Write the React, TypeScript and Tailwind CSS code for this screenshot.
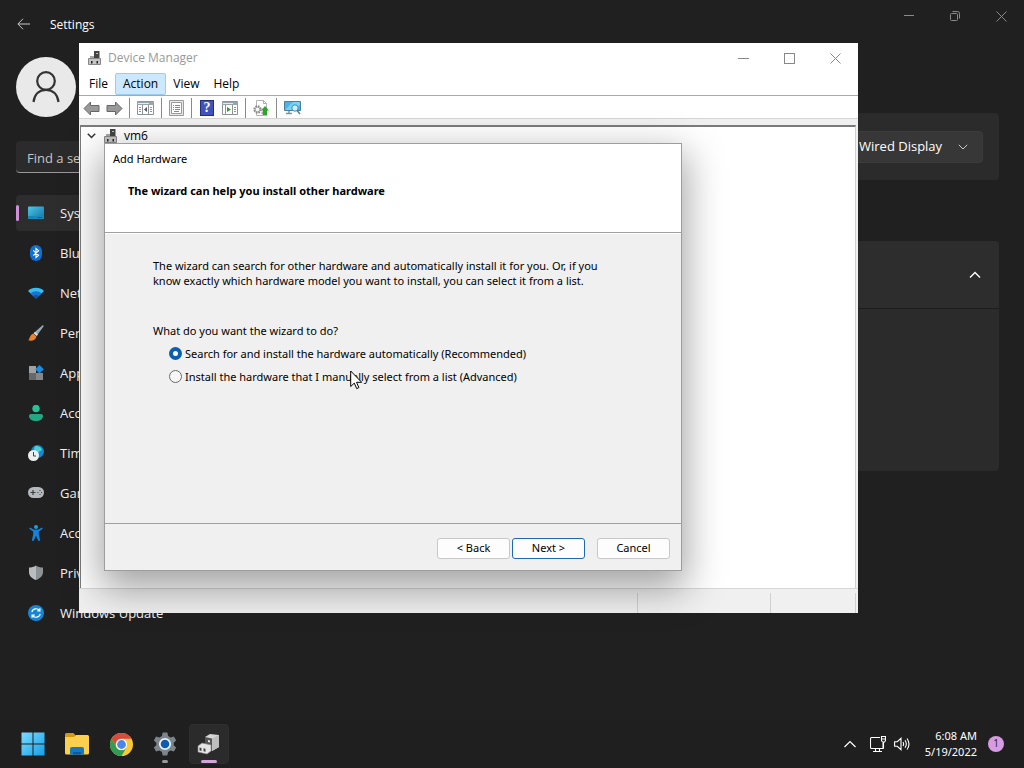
import type { ReactNode } from "react";
import clsx from "clsx";

const uiFont = "font-['Open_Sans','Noto_Sans',sans-serif]";
const dialogFont = "font-['Noto_Sans','Open_Sans',sans-serif]";

type NavItem_Props = {
  label: string;
  icon: ReactNode;
  active?: boolean;
};

type Children_Props = {
  children: ReactNode;
};

const Svg16 = ({ children }: Children_Props) => (
  <svg width="16" height="16" viewBox="0 0 16 16" aria-hidden="true" className="shrink-0">
    {children}
  </svg>
);

const navItems: NavItem_Props[] = [
  {
    label: "System",
    active: true,
    icon: (
      <Svg16>
        <defs>
          <linearGradient id="sys" x1="0" y1="0" x2="1" y2="1">
            <stop offset="0" stopColor="#4cc8ea" />
            <stop offset="1" stopColor="#1173a4" />
          </linearGradient>
        </defs>
        <rect x="0" y="1.500" width="16" height="12.500" rx="1" fill="url(#sys)" />
        <path d="M0 11h16v2a1 1 0 0 1-1 1H1a1 1 0 0 1-1-1z" fill="#1689b8" />
        <path d="M10 12.5h1.5M12.5 12.5H14" stroke="#0b4666" />
      </Svg16>
    ),
  },
  {
    label: "Bluetooth & devices",
    icon: (
      <Svg16>
        <rect x="2" y="0" width="12" height="16" rx="6" fill="#0f70d2" />
        <path d="M5.2 5.3l5.4 5L8 12.6V3.4l2.6 2.3-5.4 5" fill="none" stroke="#fff" strokeWidth="1.1" />
      </Svg16>
    ),
  },
  {
    label: "Network & internet",
    icon: (
      <Svg16>
        <path d="M8 13.500L0 6C4 1.600 12 1.600 16 6z" fill="#38bdf2" />
        <path d="M8 13.500L2.600 8.400c3-2.800 7.800-2.800 10.800 0z" fill="#1574d4" />
        <path d="M8 13.500l-2.800-2.600c1.600-1.300 4-1.300 5.600 0z" fill="#0b50a6" />
      </Svg16>
    ),
  },
  {
    label: "Personalization",
    icon: (
      <Svg16>
        <path d="M14.300.4c1-.6 1.700.2 1.200 1.200L8.700 10.800 5.800 8z" fill="#94a9b5" />
        <path d="M7 6.800l2.900 2.700-1.200 1.600-3-2.900z" fill="#d9dee1" />
        <path d="M5.400 8.500l3 2.900C8 15 3.500 16.500.3 15.300 2 13 2 9.500 5.400 8.500z" fill="#e8852c" />
      </Svg16>
    ),
  },
  {
    label: "Apps",
    icon: (
      <Svg16>
        <path d="M1 1h7v7H1z" fill="#a0a3a5" />
        <path d="M1 8h7v7H1z" fill="#66696b" />
        <path d="M8 8h7v7H8z" fill="#85888a" />
        <path d="M11.500 0l4.300 4.200-4.300 4.300-4.300-4.300z" fill="#1b8de0" />
      </Svg16>
    ),
  },
  {
    label: "Accounts",
    icon: (
      <Svg16>
        <circle cx="8" cy="3.500" r="3.700" fill="#24c397" />
        <path d="M3 9h10a2 2 0 0 1 2 2c0 3-3 5-7 5s-7-2-7-5a2 2 0 0 1 2-2z" fill="#23a883" />
      </Svg16>
    ),
  },
  {
    label: "Time & language",
    icon: (
      <Svg16>
        <circle cx="9.500" cy="6.500" r="6.500" fill="#1a86cd" />
        <path d="M7 1c3-.5 6 1 7 4-1 1-3 1-4 3-2 0-4-2-4-4z" fill="#4bd0d4" />
        <circle cx="5.500" cy="10.500" r="5.500" fill="#eceff0" />
        <path d="M5.500 7v4H8" fill="none" stroke="#444" />
      </Svg16>
    ),
  },
  {
    label: "Gaming",
    icon: (
      <Svg16>
        <rect x="0" y="2" width="16" height="11" rx="5.500" fill="#b3b9bd" />
        <path d="M2.500 7.500h5M5 5v5" stroke="#3c3f42" strokeWidth="1.200" />
        <path d="M9.500 7.500h1M13 7.500h1M11.500 5.500h1M11.500 9.500h1" stroke="#3c3f42" strokeWidth="1.200" />
      </Svg16>
    ),
  },
  {
    label: "Accessibility",
    icon: (
      <Svg16>
        <circle cx="8" cy="2" r="2" fill="#1e9bec" />
        <path
          d="M2 2.500l4 2.300h4l4-2.300.8 1.300L10.800 6.500v3l1.400 6-1.700.4L8 10.800 5.500 15.900l-1.700-.4 1.400-6v-3L1.200 3.800z"
          fill="#1583dc"
        />
      </Svg16>
    ),
  },
  {
    label: "Privacy & security",
    icon: (
      <Svg16>
        <path d="M8 .5c2 1.500 4.500 2 7 2V7c0 4-3 6.500-7 8z" fill="#8d9295" />
        <path d="M8 .5c-2 1.500-4.500 2-7 2V7c0 4 3 6.500 7 8z" fill="#b9bdbf" />
      </Svg16>
    ),
  },
  {
    label: "Windows Update",
    icon: (
      <Svg16>
        <circle cx="8" cy="8" r="8" fill="#1486d8" />
        <path
          d="M3.800 7.200a4.300 4.300 0 0 1 7.800-1.500M12.200 8.800a4.300 4.300 0 0 1-7.800 1.500M11.900 3.300v2.600H9.300M4.100 12.700v-2.600h2.600"
          fill="none"
          stroke="#fff"
          strokeWidth="1.200"
        />
      </Svg16>
    ),
  },
];

const NavItem = ({ label, icon, active }: NavItem_Props) => (
  <li>
    <a
      href="#"
      className={clsx(
        "relative flex h-9 items-center gap-4 rounded pl-3 text-[13px] text-[#f3f3f3]",
        active && "bg-[#2d2d2d]"
      )}
    >
      {active && <span className="absolute left-0 h-4 w-[3px] rounded-full bg-[#d18fd8]" />}
      {icon}
      <span className="pt-[2px]">{label}</span>
    </a>
  </li>
);

const DeviceIcon = () => (
  <svg width="14" height="14" viewBox="0 0 14 14" aria-hidden="true" className="shrink-0">
    <path d="M6 0h5.500v7H6z" fill="#444" />
    <path d="M8 2h2v1H8z" fill="#bbb" />
    <path d="M2 5h4v3H2z" fill="#a5a5a5" />
    <path d="M.5 7.500h12v6H.5z" fill="#c4c4c4" stroke="#888" />
    <path d="M3 10h1.500v2.500H3zM8.500 10H10v2.500H8.500z" fill="#222" />
  </svg>
);

const SettingsWindow = () => (
  <main className="flex flex-1 flex-col">
    <header className="flex items-start justify-between">
      <div className="flex h-12 items-center gap-5 pl-[17px]">
        <button aria-label="Back">
          <svg width="13" height="12" viewBox="0 0 13 12" fill="none" stroke="#c8c8c8">
            <path d="M6 .8L.9 6 6 11.200M1 6h12" />
          </svg>
        </button>
        <h1 className="pt-[2px] text-xs text-white">Settings</h1>
      </div>
      <div className="flex h-8 text-[#8a8a8a]">
        <button aria-label="Minimize" className="flex w-[46px] items-center justify-center">
          <svg width="10" height="10" fill="none" stroke="currentColor">
            <path d="M0 4.500h10" />
          </svg>
        </button>
        <button aria-label="Restore" className="flex w-[46px] items-center justify-center">
          <svg width="10" height="10" fill="none" stroke="currentColor">
            <rect x=".5" y="2.500" width="7" height="7" rx="1" />
            <path d="M2.500.5h5a2 2 0 0 1 2 2v5" />
          </svg>
        </button>
        <button aria-label="Close" className="flex w-[46px] items-center justify-center">
          <svg width="11" height="11" fill="none" stroke="currentColor">
            <path d="M.5.5l10 10M10.500.5l-10 10" />
          </svg>
        </button>
      </div>
    </header>

    <div className="flex flex-1">
      <aside className="w-[300px] shrink-0 pt-[9px] pl-4">
        <div className="flex size-[60px] items-center justify-center rounded-full bg-[#e9e9e9]">
          <svg width="28" height="32" viewBox="0 0 28 32" fill="none" stroke="#333" strokeWidth="2.200">
            <circle cx="14" cy="10" r="8.800" />
            <path d="M1.500 31c1-8 6-12.200 12.500-12.200S25.500 23 26.500 31" />
          </svg>
        </div>
        <input
          type="text"
          aria-label="Find a setting"
          placeholder="Find a setting"
          className="mt-6 h-8 w-full rounded border-b border-[#9a9a9a] bg-[#2b2b2b] px-[11px] pt-[2px] text-[13px] text-white placeholder:text-[#c5c5c5]"
        />
        <ul className="mt-[22px] flex flex-col gap-1">
          {navItems.map((item) => (
            <NavItem key={item.label} {...item} />
          ))}
        </ul>
      </aside>

      <section className="flex-1 pt-[65px] pr-[25px] pl-6">
        <div className="flex h-[67px] items-center justify-end rounded bg-[#2b2b2b] pr-4">
          <div className="relative">
            <select
              aria-label="Display"
              className="h-8 w-[137px] appearance-none rounded border border-[#3c3c3c] bg-[#373737] pl-3 text-[13px] text-white"
            >
              <option>Wired Display</option>
            </select>
            <svg
              width="10"
              height="6"
              fill="none"
              stroke="#ccc"
              className="pointer-events-none absolute top-[13px] right-[15px]"
            >
              <path d="M.8.8L5 5 9.200.8" />
            </svg>
          </div>
        </div>
        <div className="mt-[61px] rounded bg-[#2b2b2b]">
          <button
            aria-label="Collapse"
            className="flex h-[67px] w-full items-center justify-end rounded-t bg-[#2d2d2d] pr-[18px]"
          >
            <svg width="12" height="8" fill="none" stroke="#fff" strokeWidth="1.400">
              <path d="M1 6.500l5-5 5 5" />
            </svg>
          </button>
          <div className="h-[163px] border-t border-[#1d1d1d]" />
        </div>
      </section>
    </div>
  </main>
);

const ToolDivider = () => <span className="h-5 w-px bg-[#8b8b8b]" />;

const Toolbar = () => (
  <div className="flex h-[23px] items-center border-b border-[#d5d5d5] pt-[2px] pl-1">
    <button aria-label="Back" className="mr-[6px]">
      <svg width="17" height="15" viewBox="0 0 17 15">
        <path d="M1 7.500L7.500 1v3.500H16v6H7.500V14z" fill="#999" stroke="#666" />
      </svg>
    </button>
    <button aria-label="Forward" className="mr-[6px]">
      <svg width="17" height="15" viewBox="0 0 17 15">
        <path d="M16 7.500L9.500 1v3.500H1v6h8.500V14z" fill="#999" stroke="#666" />
      </svg>
    </button>
    <ToolDivider />
    <button aria-label="Show console tree" className="mx-[7px]">
      <svg width="17" height="14" viewBox="0 0 17 14">
        <path d="M.5.5h16v13H.5z" fill="#fff" stroke="#8d9499" />
        <path d="M0 1h17v3H0z" fill="#9aa4ac" />
        <path d="M1 2.500h11" stroke="#e5eaee" />
        <path d="M5.500 4v9M11.500 4v9M2 6.500h2M2 8.500h2M2 10.500h2M13 6.500h2M13 8.500h2M13 10.500h2" stroke="#8d9499" />
        <path d="M10 6v5L7 8.500z" fill="#556" />
      </svg>
    </button>
    <ToolDivider />
    <button aria-label="Properties" className="mx-[7px]">
      <svg width="15" height="16" viewBox="0 0 15 16">
        <path d="M.5.5h14v15H.5z" fill="#ececec" stroke="#9a9a9a" />
        <path d="M2.500 2.500h10v11h-10z" fill="#fff" stroke="#999" />
        <path d="M4 5.500h1M6 5.500h5M4 7.500h1M6 7.500h5M4 9.500h1M6 9.500h5M5 11.500h5" stroke="#888" />
      </svg>
    </button>
    <ToolDivider />
    <button aria-label="Help" className="relative mx-2 h-4 w-[14px] border border-[#222f7c] bg-[#4353bd]">
      <span className="absolute inset-0 flex items-center justify-center font-['Liberation_Serif',serif] text-sm font-bold text-white">
        ?
      </span>
    </button>
    <button aria-label="Show action pane" className="mr-[7px]">
      <svg width="16" height="14" viewBox="0 0 16 14">
        <path d="M.5.5h15v13H.5z" fill="#fff" stroke="#8d9499" />
        <path d="M0 1h16v3H0z" fill="#9aa4ac" />
        <path d="M1 2.500h10" stroke="#e5eaee" />
        <path d="M3.500 4v9M10.500 4v9M12 6.500h2M12 8.500h2M12 10.500h2" stroke="#8d9499" />
        <path d="M5 6v5l4-2.500z" fill="#3a9a35" />
      </svg>
    </button>
    <ToolDivider />
    <button aria-label="Update driver" className="mx-[7px]">
      <svg width="16" height="16" viewBox="0 0 16 16">
        <path d="M3.500.5h7l3 3v12h-10z" fill="#fff" stroke="#b5b5b5" />
        <path d="M10.500.5v3h3" fill="none" stroke="#aaa" />
        <circle cx="4.500" cy="9.500" r="3.300" fill="#eee" stroke="#8b8b8b" strokeWidth="1.800" strokeDasharray="1.600 1" />
        <circle cx="4.500" cy="9.500" r="2.400" fill="#f5f5f5" stroke="#9b9b9b" />
        <path d="M8 13l2-2 1.500 2L10 15z" fill="#aaa" />
        <path d="M12 6l4 4.500h-2V15h-4v-4.500H8z" fill="#2fa52c" />
      </svg>
    </button>
    <ToolDivider />
    <button aria-label="Scan for hardware changes" className="ml-[7px]">
      <svg width="18" height="16" viewBox="0 0 18 16">
        <path d="M.5 1.500h16v9H.5z" fill="#4cb4e4" stroke="#4a7f9c" />
        <path d="M1 10L9 2h7v3l-6 5z" fill="#7cd0f2" />
        <path d="M2 13.500h6M5 11v2" stroke="#7a96a6" strokeWidth="1.500" />
        <circle cx="11" cy="8" r="3.200" fill="#cdeefb" stroke="#3a8fbe" />
        <path d="M13 10.500l3 3.500" stroke="#5f7e90" strokeWidth="1.500" />
      </svg>
    </button>
  </div>
);

const AddHardwareDialog = () => (
  <form
    role="dialog"
    aria-label="Add Hardware"
    onSubmit={(e) => e.preventDefault()}
    className={clsx(
      dialogFont,
      "absolute top-[16px] right-[173px] left-[23px] border border-[#9d9d9d] bg-[#f0f0f0] text-[11px] text-black shadow-[0_14px_36px_4px_rgba(0,0,0,0.36)]"
    )}
  >
    <div className="h-[89px] border-b border-[#a0a0a0] bg-white pt-[6px] pl-2">
      <h2 className="leading-[18px]">Add Hardware</h2>
      <p className="mt-[14px] pl-[15px] leading-[18px] font-bold">
        The wizard can help you install other hardware
      </p>
    </div>
    <div className="h-[290px] border-t border-t-white pt-6 pl-12 leading-[15px]">
      <p>
        The wizard can search for other hardware and automatically install it for you. Or, if you
        <br />
        know exactly which hardware model you want to install, you can select it from a list.
      </p>
      <fieldset className="mt-[35px]">
        <legend>What do you want the wizard to do?</legend>
        <label className="mt-2 ml-4 flex items-center gap-[3px]">
          <input
            type="radio"
            name="mode"
            defaultChecked
            className="size-[13px] appearance-none rounded-full border border-[#6a6a6a] bg-[#f6f6f6] checked:border-4 checked:border-[#0b5fae] checked:bg-white"
          />
          Search for and install the hardware automatically (Recommended)
        </label>
        <label className="mt-2 ml-4 flex items-center gap-[3px]">
          <input
            type="radio"
            name="mode"
            className="size-[13px] appearance-none rounded-full border border-[#6a6a6a] bg-[#f6f6f6] checked:border-4 checked:border-[#0b5fae] checked:bg-white"
          />
          Install the hardware that I manually select from a list (Advanced)
        </label>
      </fieldset>
    </div>
    <div className="flex h-[47px] justify-end border-t border-[#a0a0a0] pt-[14px] pr-[11px]">
      <button className="mr-[2px] h-[21px] w-[73px] rounded-[3px] border border-[#c8c8c8] bg-[#fdfdfd]">&lt; Back</button>
      <button className="mr-3 h-[21px] w-[73px] rounded-[3px] border border-[#1a6aad] bg-[#fdfdfd]">Next &gt;</button>
      <button className="h-[21px] w-[73px] rounded-[3px] border border-[#c8c8c8] bg-[#fdfdfd]">Cancel</button>
    </div>
  </form>
);

const DeviceManager = () => (
  <section
    aria-label="Device Manager"
    className="absolute top-[43px] right-[166px] bottom-[155px] left-[79px] flex flex-col bg-[#f0f0f0] text-xs text-black"
  >
    <div className="bg-white">
      <div className="flex h-[30px] items-center pl-[9px]">
        <DeviceIcon />
        <h2 className="grow pl-[6px] text-[#999]">Device Manager</h2>
        <div className="flex h-7 text-[#888]">
          <button aria-label="Minimize" className="flex w-[46px] items-center justify-center">
            <svg width="11" height="11" fill="none" stroke="currentColor">
              <path d="M0 5.500h11" />
            </svg>
          </button>
          <button aria-label="Maximize" className="flex w-[46px] items-center justify-center">
            <svg width="11" height="11" fill="none" stroke="currentColor">
              <rect x=".5" y=".5" width="10" height="10" />
            </svg>
          </button>
          <button aria-label="Close" className="flex w-[46px] items-center justify-center">
            <svg width="11" height="11" fill="none" stroke="currentColor">
              <path d="M.5.5l10 10M10.500.5l-10 10" />
            </svg>
          </button>
        </div>
      </div>
      <nav className="flex h-[23px] border-b border-[#a8a8a8] pl-[2px]">
        <button className="pr-[7px] pl-2">File</button>
        <button className="rounded-[2px] border border-[#99cdf2] bg-[#cce8ff] px-[7px]">Action</button>
        <button className="px-[7px]">View</button>
        <button className="px-[7px]">Help</button>
      </nav>
      <Toolbar />
    </div>
    <div className="relative mt-[6px] mr-[2px] ml-px flex-1 border-t-2 border-r border-l border-t-[#7b7b7b] border-r-[#d0d0d0] border-l-[#7b7b7b] bg-white">
      <div className="absolute inset-0 overflow-hidden">
        <div className="flex h-[18px] items-center pl-[6px]">
          <svg width="9" height="6" fill="none" stroke="#333" strokeWidth="1.500">
            <path d="M.8.8l3.700 3.700L8.200.8" />
          </svg>
          <span className="flex items-center gap-[6px] pl-2">
            <DeviceIcon />
            vm6
          </span>
        </div>
      </div>
      <AddHardwareDialog />
    </div>
    <footer className="flex h-[25px] justify-end border-t border-[#d8d8d8] pt-1 pr-[2px]">
      <div className="w-[133px] border-l border-[#d0d0d0]" />
      <div className="w-[86px] border-x border-[#d0d0d0]" />
    </footer>
  </section>
);

const taskButton = "relative flex size-10 items-center justify-center rounded";

const Taskbar = () => (
  <footer className="flex h-12 items-center justify-between bg-[#1f1f1f] pr-5 pl-[13px]">
    <div className="flex gap-1">
      <button aria-label="Start" className={taskButton}>
        <svg width="24" height="24" viewBox="0 0 24 24">
          <defs>
            <linearGradient id="win" x1="0" y1="0" x2="1" y2="1">
              <stop offset="0" stopColor="#7adcff" />
              <stop offset="1" stopColor="#159fe8" />
            </linearGradient>
          </defs>
          <path d="M.5.5h11v11H.5zM12.500.5h11v11h-11zM.5 12.500h11v11H.5zM12.500 12.500h11v11h-11z" fill="url(#win)" />
        </svg>
      </button>
      <button aria-label="File Explorer" className={taskButton}>
        <svg width="24" height="22" viewBox="0 0 24 22">
          <path d="M0 1.500A1.500 1.500 0 0 1 1.500 0h7L11 3v1H0z" fill="#d9980f" />
          <path d="M0 4h9l2-2h11.500A1.500 1.500 0 0 1 24 3.500V20a1.500 1.500 0 0 1-1.500 1.500h-21A1.500 1.500 0 0 1 0 20z" fill="#fbd04e" />
          <path d="M5 21.500V16a2 2 0 0 1 2-2h10a2 2 0 0 1 2 2v5.500z" fill="#1578c2" />
          <path d="M8 19h8v2.500H8z" fill="#0c5a9b" />
        </svg>
      </button>
      <button aria-label="Google Chrome" className={taskButton}>
        <svg width="23" height="23" viewBox="0 0 24 24">
          <circle cx="12" cy="12" r="12" fill="#fbc934" />
          <path d="M1.600 6A12 12 0 0 1 22.400 6H12a6 6 0 0 0-5.200 9z" fill="#d94a3e" />
          <path d="M1.600 6A12 12 0 0 0 12 24l5.200-9A6 6 0 0 1 6.800 15z" fill="#2f9c50" />
          <circle cx="12" cy="12" r="5.800" fill="#fff" />
          <circle cx="12" cy="12" r="4.600" fill="#4a87e8" />
        </svg>
      </button>
      <button aria-label="Settings" className={taskButton}>
        <svg width="24" height="24" viewBox="0 0 24 24">
          <path
            d="M9.700.6h4.600l.8 3.300 2.500 1.500 3.300-1 2.300 4-2.500 2.300v2.600l2.500 2.300-2.300 4-3.300-1-2.500 1.500-.8 3.300H9.700l-.8-3.300-2.500-1.500-3.300 1-2.300-4 2.500-2.300v-2.600L.8 8.400l2.300-4 3.300 1 2.500-1.500z"
            fill="#7d848a"
          />
          <circle cx="12" cy="12" r="5.200" fill="#0f5cae" stroke="#e8f1f8" strokeWidth="1.800" />
        </svg>
        <span className="absolute bottom-px h-[3px] w-[6px] rounded-full bg-[#999]" />
      </button>
      <button aria-label="Device Manager" className={clsx(taskButton, "border border-[#2f2f2f] bg-[#2b2b2b]")}>
        <svg width="24" height="22" viewBox="0 0 24 22">
          <path d="M8 4l5-3 9 1v12l-7 4-7-3z" fill="#d6d6d6" />
          <path d="M8 4l7 1.500V18l-7-3z" fill="#555" />
          <path d="M15 5.500L22 2v12l-7 4z" fill="#bdbdbd" />
          <path d="M1 13l4-3 9 2v6l-4 3-9-2z" fill="#e6e6e6" stroke="#888" strokeWidth=".6" />
          <path d="M2.500 14.500l2 .4v3l-2-.4zM6.500 15.300l2 .4v3l-2-.4z" fill="#444" />
          <path d="M11 7l2 .6v2L11 9z" fill="#e8e8e8" />
        </svg>
        <span className="absolute bottom-0 h-[3px] w-4 rounded-full bg-[#d2a6d8]" />
      </button>
    </div>
    <div className="flex items-center text-xs text-white">
      <button aria-label="Show hidden icons" className="mr-[14px]">
        <svg width="12" height="8" fill="none" stroke="#fff" strokeWidth="1.200">
          <path d="M.5 7L6 1.500 11.500 7" />
        </svg>
      </button>
      <button aria-label="Network" className="mr-2">
        <svg width="16" height="16" viewBox="0 0 16 16" fill="none" stroke="#fff" strokeWidth="1.100">
          <path d="M10 1.500H1.500a1 1 0 0 0-1 1v9a1 1 0 0 0 1 1H13V7M3 15.500h9M5.500 12.500v3M9.500 12.500v3M11.500.5h4v4l-1 1.500h-2l-1-1.500zM11.500 3h4M13.500 6v6.500" />
        </svg>
      </button>
      <button aria-label="Volume" className="mr-[14px]">
        <svg width="17" height="14" viewBox="0 0 17 14" fill="none" stroke="#fff" strokeWidth="1.100">
          <path d="M.6 4.700h2.700L7 1.300v11.400L3.300 9.300H.6zM9 5q1.200 2 0 4M11 3.200q2.600 3.800 0 7.600M13 1.500q4 5.500 0 11" />
        </svg>
      </button>
      <time className={clsx(dialogFont, "mr-[11px] text-right text-[11px] leading-4")}>
        6:08 AM
        <br />
        5/19/2022
      </time>
      <span className="flex size-4 items-center justify-center rounded-full bg-[#d79be2] text-[10px] text-[#222]">1</span>
    </div>
  </footer>
);

const App = () => {
  return (
    <div className={clsx(uiFont, "relative flex min-h-screen flex-col overflow-hidden bg-[#202020]")}>
      <SettingsWindow />
      <Taskbar />
      <DeviceManager />
      {/* mouse pointer */}
      <svg
        width="13"
        height="20"
        viewBox="0 0 13 20"
        aria-hidden="true"
        className="pointer-events-none absolute top-[370px] left-[350px]"
      >
        <path
          d="M.7 1v15.500l3.600-3.400 2.400 5.500 2.200-1-2.400-5.300h5.200z"
          fill="#fff"
          stroke="#000"
        />
      </svg>
    </div>
  );
};

export default App;
